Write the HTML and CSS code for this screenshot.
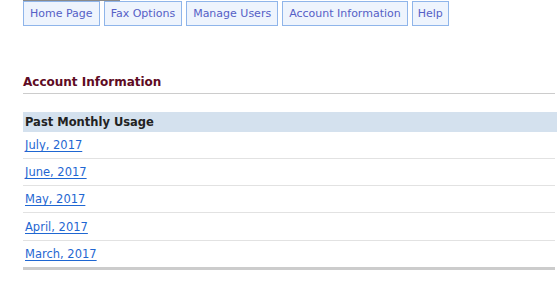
FILE: index.html
```html
<!DOCTYPE html>
<html lang="en">

<head>
    <meta charset="UTF-8">
    <title>Account Information</title>
    <link rel="stylesheet" href="styles.css">
</head>

<body>
    <div class="page">
        <div class="topline"></div>

        <!-- Main navigation -->
        <div class="nav">
            <a class="nav-btn" href="#">Home Page</a>
            <a class="nav-btn" href="#">Fax Options</a>
            <a class="nav-btn" href="#">Manage Users</a>
            <a class="nav-btn" href="#">Account Information</a>
            <a class="nav-btn" href="#">Help</a>
        </div>

        <h2 class="title">Account Information</h2>

        <!-- Usage list -->
        <div class="usage">
            <div class="usage-head">Past Monthly Usage</div>
            <div class="usage-row"><a href="#">July, 2017</a></div>
            <div class="usage-row"><a href="#">June, 2017</a></div>
            <div class="usage-row"><a href="#">May, 2017</a></div>
            <div class="usage-row tall"><a href="#">April, 2017</a></div>
            <div class="usage-row last"><a href="#">March, 2017</a></div>
        </div>
    </div>
</body>

</html>
```
FILE: styles.css
```css
/* Reset */
* {
    box-sizing: border-box;
    margin: 0;
    padding: 0;
}

body {
    font-family: "DejaVu Sans", Verdana, sans-serif;
    background-color: #fff;
    color: #222;
}

.page {
    padding-left: 23px;
    width: 557px;
}

.topline {
    width: 97px;
    height: 1px;
    background-color: #8a8a8a;
}

.nav {
    display: flex;
    gap: 4px;
}

.nav-btn {
    display: block;
    height: 25px;
    padding: 0 6px;
    border: 1px solid #8fb5ea;
    background-color: #eef4fd;
    color: #5560c6;
    font-size: 11px;
    line-height: 23px;
    text-decoration: none;
}

.nav-btn:last-child {
    padding: 0 5px;
}

.title {
    margin-top: 49px;
    margin-right: 2px;
    padding-bottom: 3px;
    border-bottom: 1px solid #cccccc;
    color: #5e0b24;
    font-size: 12px;
    line-height: 15px;
}

.usage {
    margin-top: 18px;
}

.usage-head {
    height: 20px;
    padding-left: 2px;
    background-color: #d4e1ee;
    color: #222;
    font-size: 11.5px;
    font-weight: bold;
    line-height: 20px;
}

.usage-row {
    height: 27px;
    margin-right: 2px;
    padding-left: 2px;
    border-bottom: 1px solid #e2e2e2;
    font-size: 11.5px;
    line-height: 27px;
}

.usage-row.tall {
    height: 28px;
    line-height: 28px;
}

.usage-row.last {
    height: 29px;
    line-height: 26px;
    border-bottom: 3px solid #cccccc;
}

.usage-row a {
    color: #1f67d2;
    text-underline-offset: 2px;
}
```
